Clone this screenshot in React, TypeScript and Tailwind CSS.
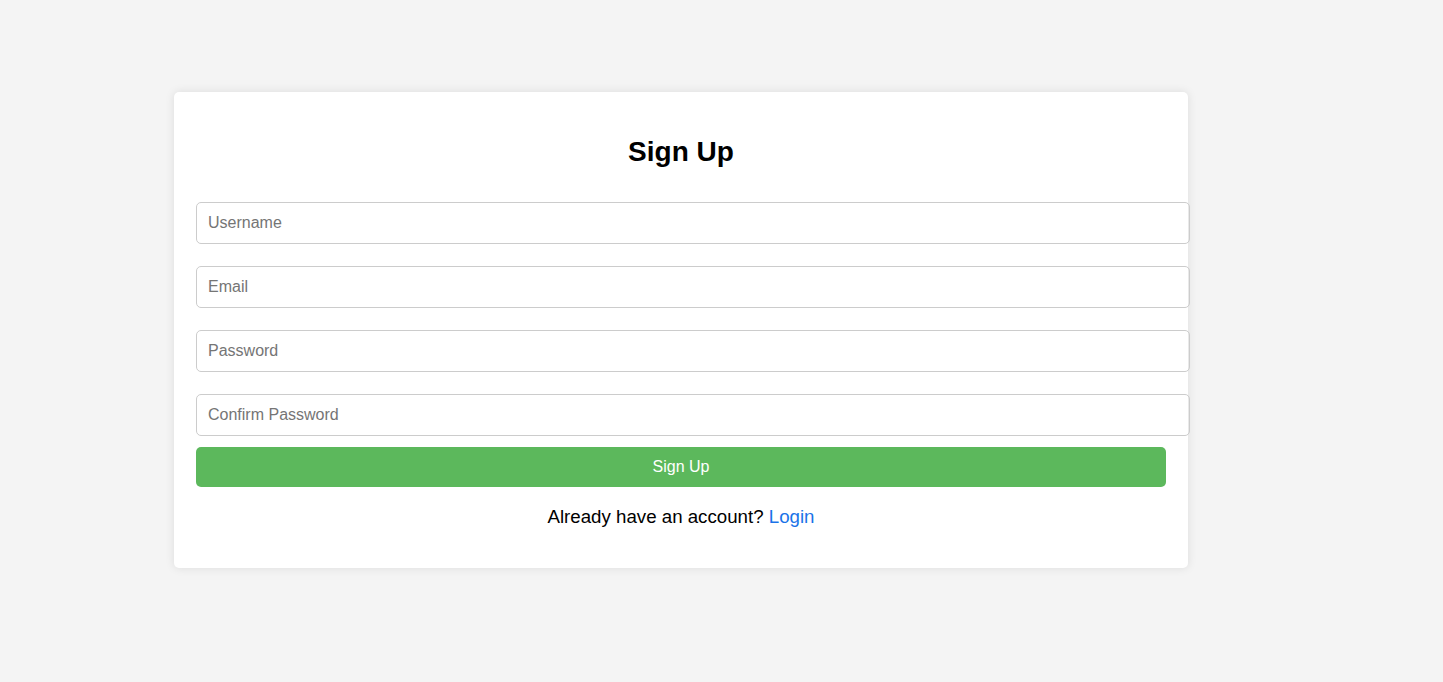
export default function App() {
  return (
    <div className="min-h-screen bg-[#f4f4f4] font-['Liberation_Sans',Arial,sans-serif] pt-[92px] pl-[174px]">
      {/* Card */}
      <div className="w-[1014px] h-[476px] bg-white rounded-[5px] shadow-[0_0_10px_rgba(0,0,0,0.1)] px-[22px] pt-[44px]">
        <h2 className="text-[28px] leading-[32px] font-bold text-black text-center mb-[34px]">Sign Up</h2>
        <form className="flex flex-col">
          <input
            type="text"
            placeholder="Username"
            className="w-[994px] h-[42px] px-[11px] border border-[#ccc] rounded-[5px] text-base text-black placeholder:text-[#757575] outline-none"
          />
          <input
            type="email"
            placeholder="Email"
            className="w-[994px] h-[42px] mt-[22px] px-[11px] border border-[#ccc] rounded-[5px] text-base text-black placeholder:text-[#757575] outline-none"
          />
          <input
            type="password"
            placeholder="Password"
            className="w-[994px] h-[42px] mt-[22px] px-[11px] border border-[#ccc] rounded-[5px] text-base text-black placeholder:text-[#757575] outline-none"
          />
          <input
            type="password"
            placeholder="Confirm Password"
            className="w-[994px] h-[42px] mt-[22px] px-[11px] border border-[#ccc] rounded-[5px] text-base text-black placeholder:text-[#757575] outline-none"
          />
          <button
            type="button"
            className="w-full h-[40px] mt-[11px] bg-[#5cb85c] text-white text-base rounded-[5px]"
          >
            Sign Up
          </button>
        </form>
        <p className="text-center text-[18.7px] leading-[21px] text-black mt-[19px]">
          Already have an account?{" "}
          <a href="#" className="text-[#1a73e8]">
            Login
          </a>
        </p>
      </div>
    </div>
  )
}
